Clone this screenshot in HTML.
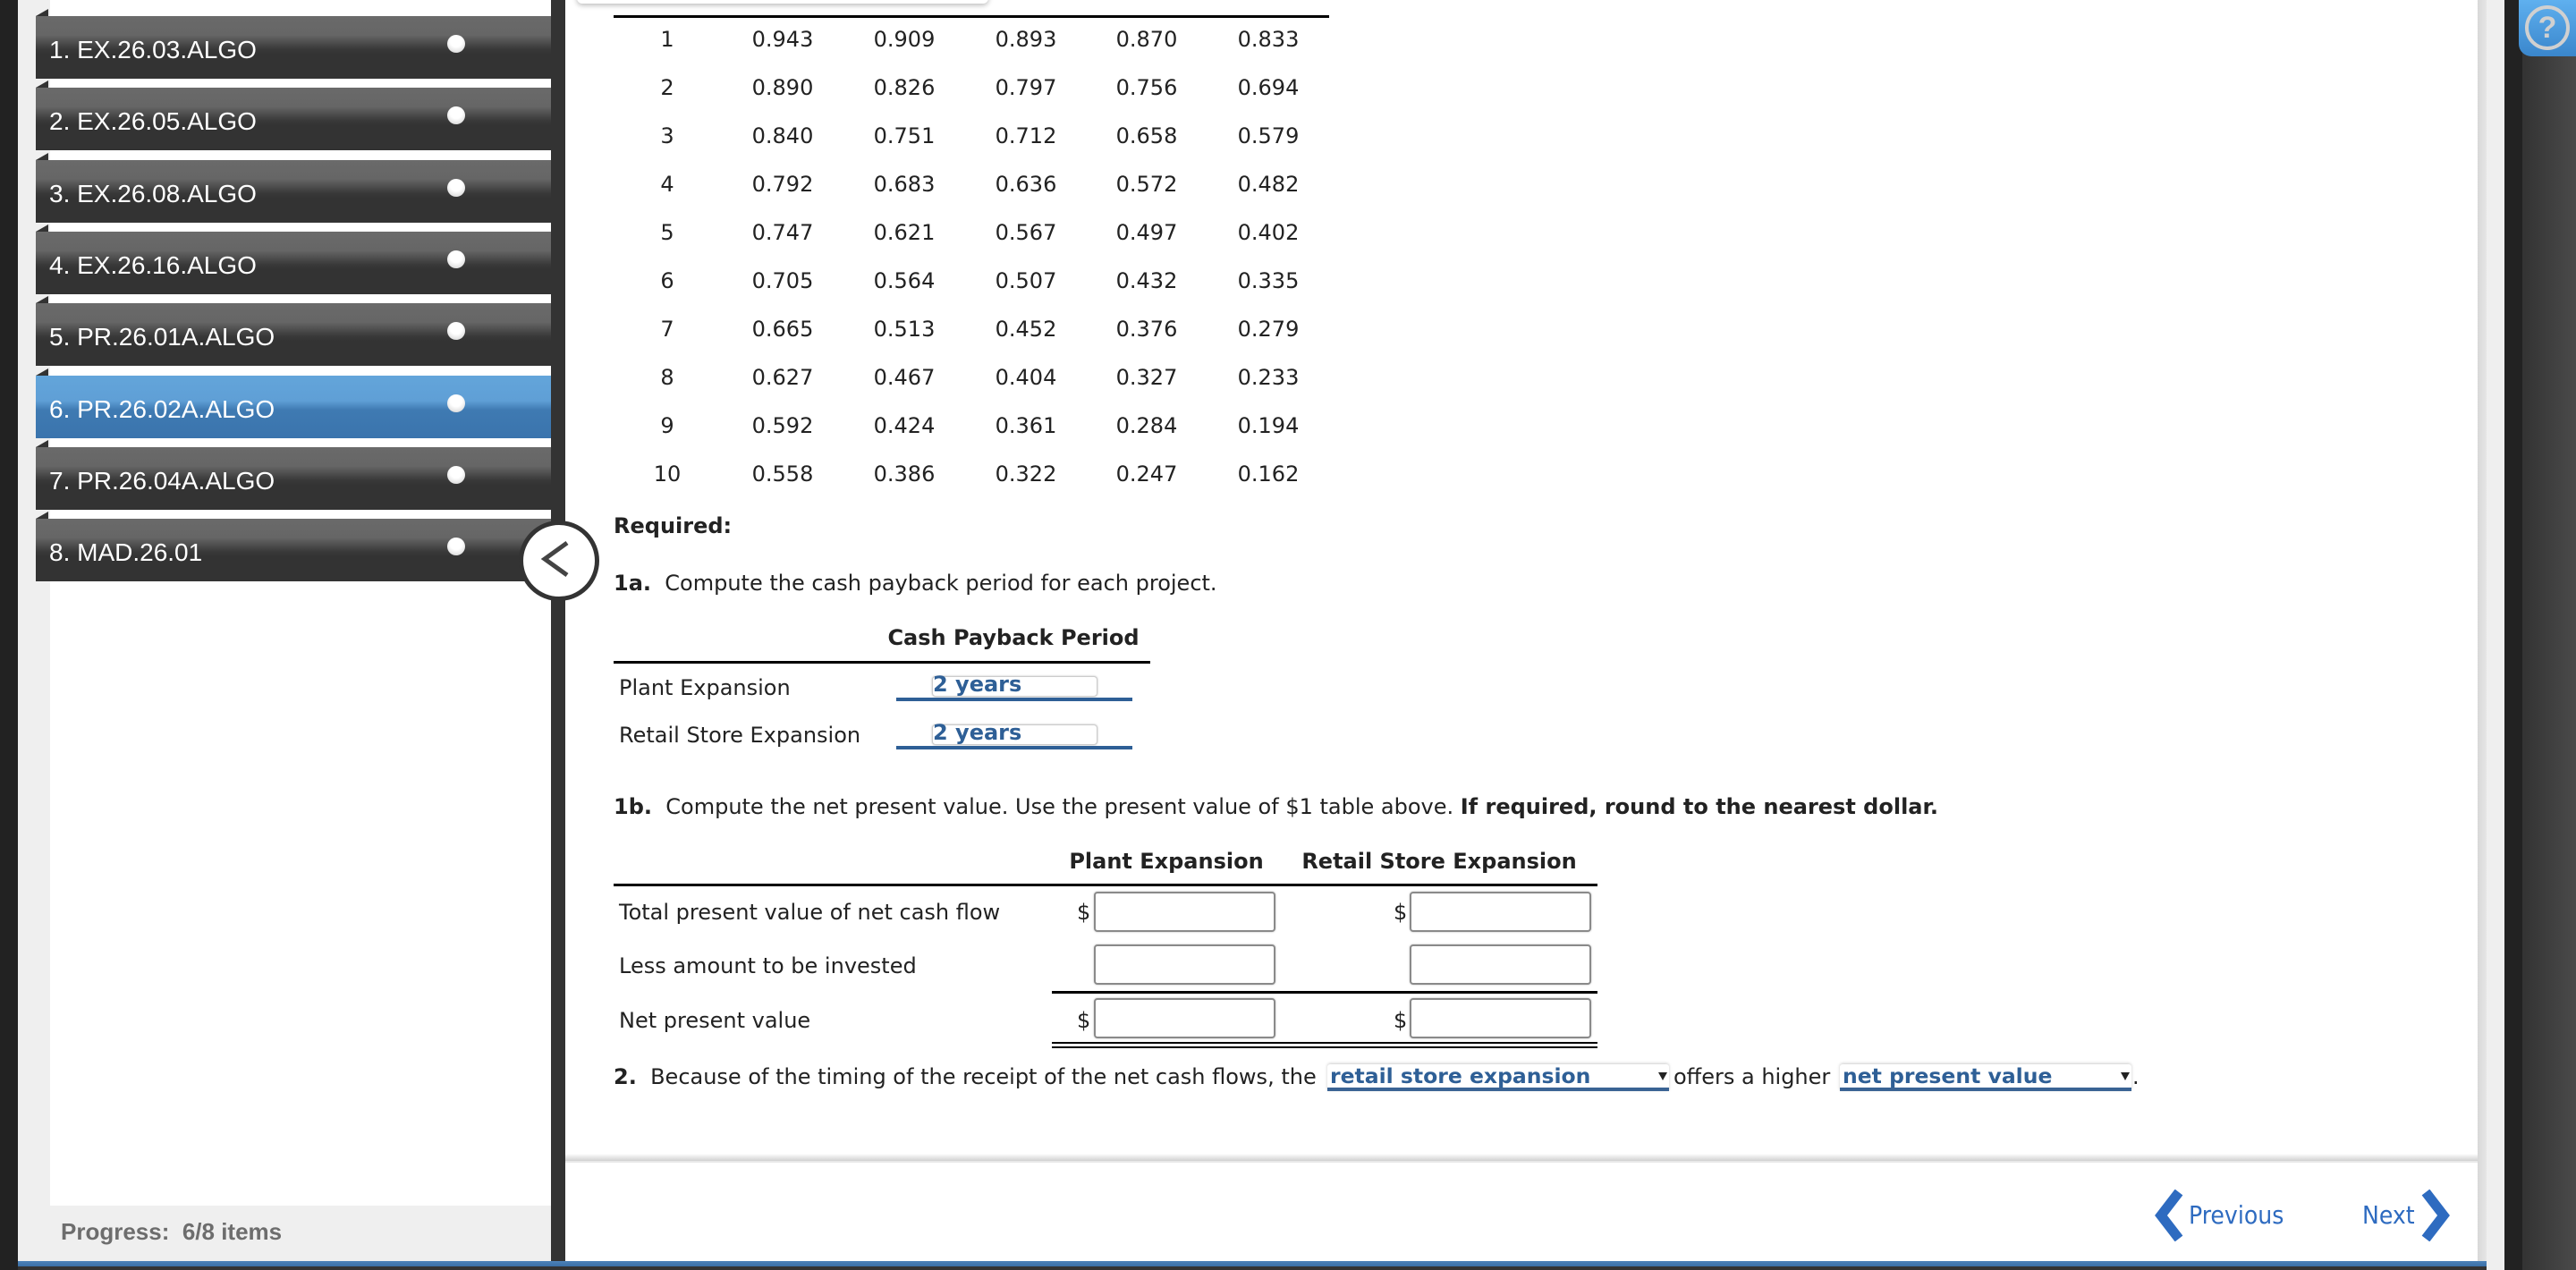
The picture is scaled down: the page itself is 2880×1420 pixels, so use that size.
<!DOCTYPE html>
<html><head><meta charset="utf-8"><style>
*{margin:0;padding:0;box-sizing:border-box}
body{width:2880px;height:1420px;position:relative;overflow:hidden;background:#fff;font-family:"DejaVu Sans",Verdana,sans-serif;color:#222}
.a{position:absolute}
.item{position:absolute;left:40px;width:576px;height:70px;background:linear-gradient(#6a6a6a 0,#666 30%,#3a3a3a 52%,#333 60%,#333 100%)}
.item.sel{background:linear-gradient(#63a5da 0,#5f9fd6 40%,#3f7ab2 55%,#3a74ad 100%)}
.item:before{content:"";position:absolute;left:0;top:-8px;border-bottom:8px solid #333;border-left:14px solid transparent;width:0;height:0}
.item span{position:absolute;left:15px;top:22px;font-family:"Liberation Sans",Arial,sans-serif;font-size:28px;color:#fff}
.item i{position:absolute;left:460px;top:21px;width:20px;height:20px;border-radius:50%;background:radial-gradient(circle at 50% 35%,#fff 40%,#ccc 100%)}
.t{position:absolute;font-size:24px;transform:translateX(-50%);white-space:nowrap}
.tx{position:absolute;font-size:24px;white-space:nowrap}
.b{font-weight:bold}
.box{position:absolute;background:#fff;border:2px solid #8a8a8a;border-radius:4px;box-shadow:0 0 2px #bbb}
.ln{position:absolute;background:#000;height:3px}
.sel2{position:absolute;color:#2e5f96;font-weight:bold;font-size:23.5px;padding-left:3px;border-bottom:4px solid #3a6394;background:#fff;box-shadow:0 -1px 3px #ccc;border-radius:3px 3px 0 0;height:30px;line-height:26px;white-space:nowrap}
.sel2 em{position:absolute;right:2px;top:9px;border-top:9px solid #222;border-left:5px solid transparent;border-right:5px solid transparent}
</style></head><body>
<div class="a" style="left:0;top:0;width:20px;height:1420px;background:#222"></div>
<div class="a" style="left:20px;top:0;width:36px;height:1410px;background:#efefef"></div>
<div class="a" style="left:56px;top:0;width:560px;height:1348px;background:#fff"></div>
<div class="a" style="left:56px;top:1348px;width:560px;height:62px;background:#efefef"></div>
<div class="a" style="left:68px;top:1362px;font-family:'Liberation Sans',Arial,sans-serif;font-weight:bold;font-size:26px;color:#6d6d6d">Progress:&nbsp; 6/8 items</div>
<div class="item" style="top:18px"><span>1. EX.26.03.ALGO</span><i></i></div>
<div class="item" style="top:98px"><span>2. EX.26.05.ALGO</span><i></i></div>
<div class="item" style="top:179px"><span>3. EX.26.08.ALGO</span><i></i></div>
<div class="item" style="top:259px"><span>4. EX.26.16.ALGO</span><i></i></div>
<div class="item" style="top:339px"><span>5. PR.26.01A.ALGO</span><i></i></div>
<div class="item sel" style="top:420px"><span>6. PR.26.02A.ALGO</span><i></i></div>
<div class="item" style="top:500px"><span>7. PR.26.04A.ALGO</span><i></i></div>
<div class="item" style="top:580px"><span>8. MAD.26.01</span><i></i></div>
<div class="a" style="left:616px;top:0;width:16px;height:1420px;background:#333"></div>
<div class="a" style="left:580px;top:582px;width:90px;height:90px;border-radius:50%;background:#fff;border:5px solid #333"></div>
<svg class="a" style="left:600px;top:600px" width="50" height="50"><path d="M34 7 L9 25 L34 43" fill="none" stroke="#444" stroke-width="5"/></svg>
<div class="a" style="left:645px;top:-20px;width:460px;height:24px;background:#fff;box-shadow:0 2px 6px #bbb;border-radius:6px"></div>
<div class="a" style="left:2770px;top:0;width:10px;height:1410px;background:linear-gradient(90deg,#d8d8d8,#e6e6e6)"></div>
<div class="a" style="left:2780px;top:0;width:20px;height:1420px;background:#efefef"></div>
<div class="a" style="left:2800px;top:0;width:20px;height:1420px;background:#222"></div>
<div class="a" style="left:2820px;top:0;width:60px;height:1420px;background:linear-gradient(90deg,#333,#4a4a4a)"></div>
<div class="a" style="left:2816px;top:0;width:64px;height:63px;background:linear-gradient(#5fb0ef,#3a86cc);border-radius:0 0 0 14px"></div>
<div class="a" style="left:2823px;top:6px;width:50px;height:50px;border:4px solid #d0d0d0;border-radius:50%;color:#d0d0d0;font:bold 34px/42px 'Liberation Sans',sans-serif;text-align:center">?</div>
<div class="a" style="left:632px;top:1290px;width:2138px;height:8px;background:linear-gradient(#fff,#d0d0d0)"></div>
<div class="a" style="left:632px;top:1298px;width:2138px;height:2px;background:#e8e8e8"></div>
<div class="a" style="left:20px;top:1410px;width:2760px;height:6px;background:linear-gradient(#4d82b8,#3a6fa6)"></div>
<div class="a" style="left:20px;top:1416px;width:2760px;height:4px;background:#333"></div>
<svg class="a" style="left:2404px;top:1330px" width="40" height="58"><path d="M32 3 L12 29 L32 55" fill="none" stroke="#2e6bc0" stroke-width="11"/></svg>
<div class="a" style="left:2447px;top:1342px;font-size:28px;color:#2e6bc0;font-family:'DejaVu Sans Condensed','DejaVu Sans',sans-serif">Previous</div>
<div class="a" style="left:2641px;top:1342px;font-size:28px;color:#2e6bc0;font-family:'DejaVu Sans Condensed','DejaVu Sans',sans-serif">Next</div>
<svg class="a" style="left:2704px;top:1330px" width="40" height="58"><path d="M8 3 L28 29 L8 55" fill="none" stroke="#2e6bc0" stroke-width="11"/></svg>
<div class="ln" style="left:686px;top:17px;width:800px"></div>
<div id="tb"></div>
<script>
var d=[[1,'0.943','0.909','0.893','0.870','0.833'],[2,'0.890','0.826','0.797','0.756','0.694'],[3,'0.840','0.751','0.712','0.658','0.579'],[4,'0.792','0.683','0.636','0.572','0.482'],[5,'0.747','0.621','0.567','0.497','0.402'],[6,'0.705','0.564','0.507','0.432','0.335'],[7,'0.665','0.513','0.452','0.376','0.279'],[8,'0.627','0.467','0.404','0.327','0.233'],[9,'0.592','0.424','0.361','0.284','0.194'],[10,'0.558','0.386','0.322','0.247','0.162']];
var xs=[746,875,1011,1147,1282,1418],h='';
d.forEach(function(r,i){r.forEach(function(v,j){h+='<div class="t" style="left:'+xs[j]+'px;top:'+(30+i*54)+'px">'+v+'</div>';});});
document.getElementById('tb').innerHTML=h;
</script>
<div class="tx b" style="left:686px;top:574px">Required:</div>
<div class="tx" style="left:686px;top:638px"><b>1a.</b>&nbsp; Compute the cash payback period for each project.</div>
<div class="tx b" style="left:1133px;top:699px;transform:translateX(-50%)">Cash Payback Period</div>
<div class="ln" style="left:686px;top:739px;width:600px"></div>
<div class="tx" style="left:692px;top:755px">Plant Expansion</div>
<div class="tx" style="left:692px;top:808px">Retail Store Expansion</div>
<div class="box" style="left:1042px;top:756px;width:185px;height:23px;border:1px solid #ccc"></div>
<div class="box" style="left:1042px;top:810px;width:185px;height:23px;border:1px solid #ccc"></div>
<div class="a b" style="left:1043px;top:751px;color:#2e5f96;font-size:24px">2 years</div>
<div class="a b" style="left:1043px;top:805px;color:#2e5f96;font-size:24px">2 years</div>
<div class="a" style="left:1002px;top:780px;width:264px;height:4px;background:#2e5f96"></div>
<div class="a" style="left:1002px;top:834px;width:264px;height:4px;background:#2e5f96"></div>
<div class="tx" style="left:686px;top:888px"><b>1b.</b>&nbsp; Compute the net present value. Use the present value of $1 table above. <b>If required, round to the nearest dollar.</b></div>
<div class="tx b" style="left:1304px;top:949px;transform:translateX(-50%)">Plant Expansion</div>
<div class="tx b" style="left:1609px;top:949px;transform:translateX(-50%)">Retail Store Expansion</div>
<div class="ln" style="left:686px;top:988px;width:1100px"></div>
<div class="tx" style="left:692px;top:1006px">Total present value of net cash flow</div>
<div class="tx" style="left:692px;top:1066px">Less amount to be invested</div>
<div class="tx" style="left:692px;top:1127px">Net present value</div>
<div class="tx" style="left:1204px;top:1006px">$</div><div class="tx" style="left:1558px;top:1006px">$</div>
<div class="tx" style="left:1204px;top:1127px">$</div><div class="tx" style="left:1558px;top:1127px">$</div>
<div class="box" style="left:1223px;top:997px;width:203px;height:45px"></div>
<div class="box" style="left:1576px;top:997px;width:203px;height:45px"></div>
<div class="box" style="left:1223px;top:1056px;width:203px;height:45px"></div>
<div class="box" style="left:1576px;top:1056px;width:203px;height:45px"></div>
<div class="ln" style="left:1176px;top:1108px;width:610px"></div>
<div class="box" style="left:1223px;top:1116px;width:203px;height:45px"></div>
<div class="box" style="left:1576px;top:1116px;width:203px;height:45px"></div>
<div class="ln" style="left:1176px;top:1165px;width:610px;height:2px"></div>
<div class="ln" style="left:1176px;top:1170px;width:610px;height:2px"></div>
<div class="tx" style="left:686px;top:1190px"><b>2.</b>&nbsp; Because of the timing of the receipt of the net cash flows, the</div>
<div class="sel2" style="left:1484px;top:1190px;width:382px">retail store expansion<em></em></div>
<div class="tx" style="left:1871px;top:1190px">offers a higher</div>
<div class="sel2" style="left:2057px;top:1190px;width:326px">net present value<em></em></div>
<div class="tx" style="left:2384px;top:1190px">.</div>
</body></html>
